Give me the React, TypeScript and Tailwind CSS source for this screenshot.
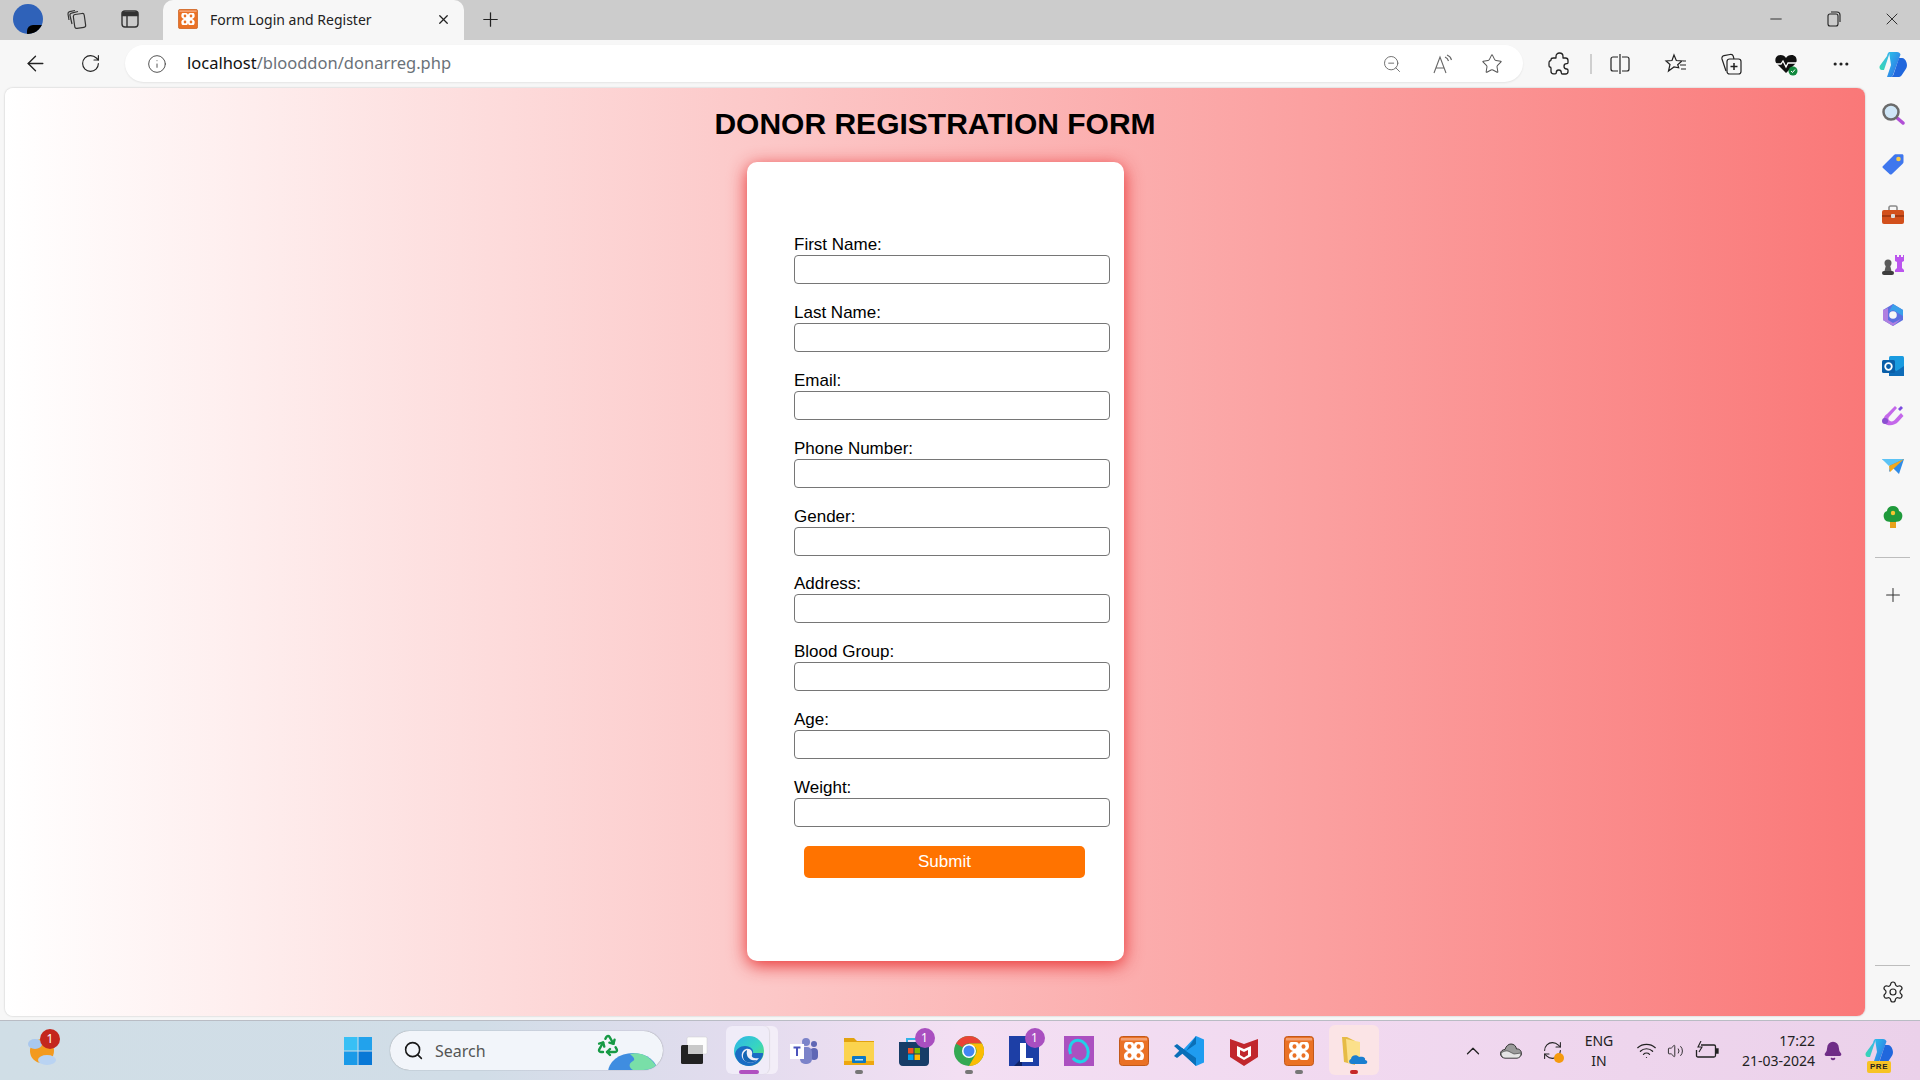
import React from "react";
import { ArrowLeft, RotateCw, Info, ZoomOut, Star, Plus, X, Minus, Settings, ChevronUp, Wifi, Volume2, Search, MoreHorizontal, Recycle, RefreshCw, Bell } from "lucide-react";

const fields = ["First Name:", "Last Name:", "Email:", "Phone Number:", "Gender:", "Address:", "Blood Group:", "Age:", "Weight:"];

function Xampp({ size = 30 }: { size?: number }) {
  return (
    <svg width={size} height={size} viewBox="0 0 30 30">
      <rect x="0.5" y="0.5" width="29" height="29" rx="3" fill="#ea7125" stroke="#c2591a" />
      <rect x="2" y="2" width="26" height="2.500" fill="#f3a071" />
      <path d="M7 6h5c2 0 3 1.500 3 3.500C15 7.500 16 6 18 6h5c1.500 0 2 2.500 2 4.500 0 2-1.500 3.500-4 4.500 2.500 1 4 2.500 4 4.500 0 2-.5 4.500-2 4.500h-5c-2 0-3-1.500-3-3.500 0 2-1 3.500-3 3.500H7c-1.500 0-2-2.500-2-4.500 0-2 1.500-3.500 4-4.500-2.500-1-4-2.500-4-4.500C5 8.500 5.500 6 7 6z" fill="#fff" />
      <ellipse cx="10.500" cy="10.500" rx="2" ry="2.200" fill="#ea7125" />
      <ellipse cx="19.500" cy="10.500" rx="2" ry="2.200" fill="#ea7125" />
      <ellipse cx="10.500" cy="19.500" rx="2" ry="2.200" fill="#ea7125" />
      <ellipse cx="19.500" cy="19.500" rx="2" ry="2.200" fill="#ea7125" />
    </svg>
  );
}

function Slot({ w, children, className = "" }: { w: string; children?: React.ReactNode; className?: string }) {
  return <div className={`relative flex shrink-0 items-center justify-center ${w} ${className}`}>{children}</div>;
}

function TitleBar() {
  return (
    <div className="flex h-[40px] shrink-0 bg-[#cccccc]">
      <Slot w="w-[13px]" />
      <div className="relative mt-[4px] h-[30px] w-[30px] overflow-hidden rounded-full bg-[#2f62b9]">
        <span className="absolute bottom-0 right-0 h-[9px] w-[16px] rounded-tl-[6px] bg-black" />
      </div>
      <Slot w="w-[68px]" className="pb-[2px]">
        <svg width="22" height="22" viewBox="0 0 22 22" fill="none" stroke="#333" strokeWidth="1.200">
          <rect x="8" y="6" width="11" height="14" rx="2" transform="rotate(-8 13 13)" />
          <path d="M6 16 4 7.500c-.3-1 .2-2 1.500-2.300L12 3.500" />
          <path d="M3 12 2 6c-.1-1.200.4-2 1.700-2.300L9 2.500" />
        </svg>
      </Slot>
      <Slot w="w-[38px]" className="pb-[2px]">
        <svg width="20" height="20" viewBox="0 0 20 20" fill="none" stroke="#333" strokeWidth="1.400">
          <rect x="2" y="2" width="16" height="16" rx="3" />
          <path d="M2.500 3.500h15v3h-15z" fill="#333" />
          <path d="M7 6v12" />
        </svg>
      </Slot>
      <div className="ml-[14px] flex h-[40px] w-[301px] shrink-0 items-center rounded-t-[10px] bg-[#f7f7f7] pb-[2px] pl-[15px] pr-[13px]">
        <Xampp size={20} />
        <span className="ml-[12px] flex-1 whitespace-nowrap font-['Noto_Sans',sans-serif] text-[14px] text-[#222]">Form Login and Register</span>
        <X size={15} color="#222" />
      </div>
      <Slot w="w-[52px]" className="pb-[2px]"><Plus size={23} strokeWidth={1.3} color="#222" /></Slot>
      <div className="flex-1" />
      <Slot w="w-[58px]" className="pb-[2px]"><Minus size={18} strokeWidth={1.2} color="#222" /></Slot>
      <Slot w="w-[58px]" className="pb-[2px]">
        <svg width="14" height="16" viewBox="0 0 14 16" fill="none" stroke="#222" strokeWidth="1.100">
          <rect x="1" y="3" width="10" height="12" rx="2" />
          <path d="M4 1h6c2 0 3 1 3 3v7" />
        </svg>
      </Slot>
      <Slot w="w-[57px]" className="pb-[2px]"><X size={20} strokeWidth={1.1} color="#222" /></Slot>
    </div>
  );
}

function Toolbar() {
  return (
    <div className="flex h-[48px] shrink-0 items-center bg-[#f7f7f7] pb-[1px]">
      <Slot w="w-[70px]"><ArrowLeft size={25} strokeWidth={1.300} color="#222" /></Slot>
      <Slot w="w-[40px]"><RotateCw size={21} strokeWidth={1.300} color="#222" /></Slot>
      <div className="ml-[15px] flex h-[37px] w-[1398px] shrink-0 items-center rounded-full bg-white pl-[22px] pr-[6px] shadow-[0_1px_2px_rgba(0,0,0,0.08)]">
        <Info size={20} strokeWidth={1.100} color="#444" />
        <span className="ml-[20px] whitespace-nowrap font-['Noto_Sans',sans-serif] text-[16.5px] text-[#111]">localhost<span className="text-[#6a7178]">/blooddon/donarreg.php</span></span>
        <div className="flex-1" />
        <Slot w="w-[50px]"><ZoomOut size={20} strokeWidth={1.100} color="#666" /></Slot>
        <Slot w="w-[50px]">
          <svg width="24" height="24" viewBox="0 0 24 24" fill="none" stroke="#666" strokeWidth="1.100">
            <path d="M4 21 10 5l6 16M6 16h8" />
            <path d="M15 5c2 1 3 2 3.500 4M17 3c2.500 1 4 3 4.500 5" />
          </svg>
        </Slot>
        <Slot w="w-[50px]"><Star size={22} strokeWidth={1.100} color="#555" /></Slot>
      </div>
      <Slot w="w-[67px]" className="pl-[5px]">
        <svg width="22" height="24" viewBox="0 0 22 24" fill="none" stroke="#222" strokeWidth="1.300" strokeLinejoin="round">
          <path d="M8 4.500C8 2.500 9.500 1 11.500 1S15 2.500 15 4.500V6h2.500C19 6 20 7 20 8.500v2c0 .8-.6 1.200-1.300 1.200-1.500 0-2.700 1-2.700 2.600s1.200 2.700 2.700 2.700c.7 0 1.300.4 1.300 1.200v1.300c0 1.500-1 2.500-2.500 2.500h-3c-.8 0-1.200-.6-1.200-1.300 0-1.500-1-2.700-2.500-2.700S8.300 19 8.300 20.500c0 .7-.5 1.300-1.200 1.300H5.500C4 21.800 3 20.800 3 19.300v-3c0-.7-.5-1.300-1.200-1.300C1 15 1 13.500 1 12s0-3 .8-3c.7 0 1.200-.5 1.200-1.200C3 6.500 4 6 5.500 6H8z" />
        </svg>
      </Slot>
      <span className="h-[20px] w-[2px] shrink-0 bg-[#cfcfcf]" />
      <Slot w="w-[56px]">
        <svg width="22" height="22" viewBox="0 0 22 22" fill="none" stroke="#222" strokeWidth="1.200">
          <path d="M9 4H4a2 2 0 0 0-2 2v10a2 2 0 0 0 2 2h5M13 4h5a2 2 0 0 1 2 2v10a2 2 0 0 1-2 2h-5M11 1v20" />
        </svg>
      </Slot>
      <Slot w="w-[55px]">
        <svg width="24" height="24" viewBox="0 0 24 24" fill="none" stroke="#222" strokeWidth="1.200">
          <path d="m10 3 2.300 5.500 5.700.5-4.300 3.800 1 3-4.700-.8-5.500 4 1.500-6.500L2 9l6-.5z" />
          <path d="M16 13h6M17 17h5M19 9h3" />
        </svg>
      </Slot>
      <Slot w="w-[55px]">
        <svg width="24" height="24" viewBox="0 0 24 24" fill="none" stroke="#222" strokeWidth="1.200">
          <path d="M7 19 3 7c-.4-1.500.4-3 2-3.300L11 2.500c1.500-.3 2.800.3 3.300 1.800L15 7" />
          <rect x="8" y="7" width="14" height="15" rx="2.500" />
          <path d="M15 11v7M11.500 14.500h7" strokeWidth="1.500" />
        </svg>
      </Slot>
      <Slot w="w-[55px]">
        <svg width="24" height="24" viewBox="0 0 24 24">
          <path d="M12 21 2.500 11.500C0 8.500 1.500 3 6.500 3c2.500 0 4.500 1 5.500 3 1-2 3-3 5.500-3 5 0 6.500 5.500 4 8.500z" fill="#111" />
          <path d="M1 12h6l2-3 3 6 2-4h9" fill="none" stroke="#fff" strokeWidth="1.300" />
          <circle cx="19" cy="19" r="4.500" fill="#128a3e" />
          <path d="m17 19 1.500 1.500 2.500-3" fill="none" stroke="#fff" strokeWidth="1" />
        </svg>
      </Slot>
      <Slot w="w-[55px]"><MoreHorizontal size={20} strokeWidth={1.800} color="#222" /></Slot>
      <Slot w="w-[49px]"><Copilot size={28} /></Slot>
    </div>
  );
}

function Copilot({ size }: { size: number }) {
  return (
    <svg width={size} height={size} viewBox="0 0 28 28">
      <defs>
        <linearGradient id="cpa" x1="0" y1="0" x2="1" y2="1">
          <stop offset="0" stopColor="#29c5e8" />
          <stop offset="0.6" stopColor="#2f8be8" />
          <stop offset="1" stopColor="#1c4fc9" />
        </linearGradient>
        <linearGradient id="cpb" x1="0" y1="1" x2="1" y2="0">
          <stop offset="0" stopColor="#36d9b0" />
          <stop offset="1" stopColor="#3bb2f0" />
        </linearGradient>
      </defs>
      <path d="M10 2h8c2 0 3 1 3.500 2.500L18 14l-4 11c-.5 1.500-1.500 2-3 2H8l4-12z" fill="url(#cpa)" />
      <path d="M8 6c.5-2 1-4 3-4l-4 12-2 6H3c-2 0-3-2-2.300-4z" fill="url(#cpb)" />
      <path d="M20 8h3c2 0 3.500 1.500 4.500 4.500.9 3 .5 5-1 7l-4 6c-1 1-2 1.500-3.500 1.500h-8c2 0 3-1 3.500-2.500z" fill="#2067dd" />
    </svg>
  );
}

function Form() {
  return (
    <main className="flex flex-1 flex-col items-center overflow-hidden rounded-[8px] bg-[linear-gradient(to_right,#ffffff,#fcc9c9_40%,#fa7878)] shadow-[0_0_2px_rgba(0,0,0,0.25)]">
      <h1 className="mt-[19px] font-['Liberation_Sans',Arial,sans-serif] text-[30px] font-bold leading-[33px] text-black">DONOR REGISTRATION FORM</h1>
      <form className="mt-[22px] h-[799px] w-[377px] rounded-[10px] bg-white pl-[47.500px] pr-[14px] pt-[71px] font-['Liberation_Sans',Arial,sans-serif] shadow-[0_4px_18px_rgba(230,30,30,0.9)]">
        {fields.map((f) => (
          <label key={f} className="mb-[16.900px] block text-[17px] text-black">
            <span className="block h-[22px] leading-[24px]">{f}</span>
            <input className="block h-[29px] w-[316px] rounded-[4px] border border-[#767676] bg-white" />
          </label>
        ))}
        <button type="button" className="ml-[10px] mt-[19px] block h-[32px] w-[281px] rounded-[5px] bg-[#ff7300] text-[17px] text-white">Submit</button>
      </form>
    </main>
  );
}

function SideIcon({ children }: { children: React.ReactNode }) {
  return <div className="flex h-[50.300px] shrink-0 items-center justify-center">{children}</div>;
}

function Sidebar() {
  return (
    <aside className="flex w-[55px] shrink-0 flex-col items-center pt-[1px]">
      <SideIcon>
        <svg width="24" height="24" viewBox="0 0 24 24">
          <path d="m15 15 7 6" stroke="#b14fd6" strokeWidth="3.500" strokeLinecap="round" />
          <circle cx="10" cy="10" r="7.500" fill="#cfe6f7" stroke="#6b6b6b" strokeWidth="2.500" />
        </svg>
      </SideIcon>
      <SideIcon>
        <svg width="24" height="24" viewBox="0 0 24 24">
          <path d="M2 14 13 3c.5-.5 1-.7 2-.7h6c1 0 1.500.6 1.500 1.500v6c0 1-.3 1.500-.8 2L11 22c-.8.700-1.800.700-2.500 0L2 16c-.7-.6-.7-1.400 0-2z" fill="#3f77ee" />
          <circle cx="17.500" cy="7" r="2.300" fill="#f6c94b" />
        </svg>
      </SideIcon>
      <SideIcon>
        <svg width="24" height="24" viewBox="0 0 24 24">
          <path d="M8 7V4.500C8 3.700 8.700 3 9.500 3h5c.8 0 1.500.7 1.500 1.500V7" fill="none" stroke="#8a8a8a" strokeWidth="1.600" />
          <rect x="1" y="7" width="22" height="14" rx="2" fill="#d2501c" />
          <rect x="1" y="12" width="22" height="2" fill="#a63a12" />
          <rect x="10" y="11" width="4" height="4" rx="1" fill="#ddd" />
        </svg>
      </SideIcon>
      <SideIcon>
        <svg width="24" height="24" viewBox="0 0 24 24">
          <path d="M14 2h2v2h2V2h2v2h2V2h1v6l-2 1v6l2 2v2h-9v-2l2-2V9l-2-1z" fill="#bb55ee" />
          <circle cx="7" cy="10" r="3.500" fill="#5b5b5b" />
          <path d="M5 12h4l1.500 6h-7z" fill="#5b5b5b" />
          <rect x="1" y="18" width="12" height="4" rx="2" fill="#3d3d3d" />
        </svg>
      </SideIcon>
      <SideIcon>
        <svg width="24" height="24" viewBox="0 0 24 24">
          <path d="M12 1 22 7v10l-10 6-10-6V7z" fill="#5d6fe0" />
          <path d="M12 1 22 7v6l-5-3-5-3-4 2z" fill="#3aa0ea" />
          <path d="M2 7l5-2v12l5 3 8-4-8 7-10-6z" fill="#b07fe0" />
          <circle cx="12" cy="12" r="3.800" fill="#f7f7f7" />
        </svg>
      </SideIcon>
      <SideIcon>
        <svg width="24" height="24" viewBox="0 0 24 24">
          <rect x="8" y="2" width="15" height="20" rx="1.500" fill="#1a9be0" />
          <path d="M8 13l7.500 4L23 12v10H8z" fill="#0e6cb8" />
          <rect x="1" y="6" width="13" height="13" rx="1.500" fill="#0a5ea8" />
          <circle cx="7.500" cy="12.500" r="3.300" fill="none" stroke="#fff" strokeWidth="1.800" />
        </svg>
      </SideIcon>
      <SideIcon>
        <svg width="24" height="24" viewBox="0 0 24 24">
          <path d="M3 19c-2-3 0-7 3-9L14 2l2 2-8 9c-1 1-1 3 1 4s4 0 5.500-2L20 9l2.500 3-5 5.500c-4 4.500-11 5-14.500 1.500z" fill="#c468ea" />
          <circle cx="4" cy="17" r="3" fill="#8a4fd0" />
          <path d="m17 5 3-3 2 2-3 3z" fill="#7c4be0" />
        </svg>
      </SideIcon>
      <SideIcon>
        <svg width="24" height="24" viewBox="0 0 24 24" className="-translate-y-[2px]">
          <path d="M1 7h22l-5 15-6-6-4 4 1-7z" fill="#2f8be8" />
          <path d="M1 7h22L8 14z" fill="#5cc3f5" />
          <path d="M8 14 23 7 9 20z" fill="#f2a81c" />
        </svg>
      </SideIcon>
      <SideIcon>
        <svg width="24" height="24" viewBox="0 0 24 24">
          <rect x="9" y="16" width="6" height="7" fill="#e8a21c" />
          <path d="M12 1c4 0 6 3 6 5 3 1 4 4 3 7-1 3-3 4-9 4s-8-1-9-4c-1-3 0-6 3-7 0-2 2-5 6-5z" fill="#1f9a3b" />
          <circle cx="12" cy="8" r="2.200" fill="#f6c431" />
        </svg>
      </SideIcon>
      <span className="mt-[15px] h-[1px] w-[35px] shrink-0 bg-[#bdbdbd]" />
      <div className="mt-[25px] flex h-[24px] shrink-0 items-center"><Plus size={22} strokeWidth={1.100} color="#333" /></div>
      <div className="flex-1" />
      <span className="h-[1px] w-[35px] shrink-0 bg-[#bdbdbd]" />
      <div className="mb-[12px] mt-[14px] flex h-[24px] shrink-0 items-center"><Settings size={24} strokeWidth={1.200} color="#222" /></div>
    </aside>
  );
}

function TaskBadge({ n }: { n: string }) {
  return <span className="absolute left-[28px] top-[7px] flex h-[20px] w-[20px] items-center justify-center rounded-full bg-[#a94fc0] font-['Noto_Sans',sans-serif] text-[12px] text-white">{n}</span>;
}

function Dot({ c, w = "w-[8px]" }: { c: string; w?: string }) {
  return <span className={`absolute bottom-[6px] left-1/2 h-[4px] -translate-x-1/2 rounded-full ${w} ${c}`} />;
}

function Edge() {
  return (
    <svg width="30" height="30" viewBox="0 0 30 30">
      <defs>
        <linearGradient id="edg" x1="0" y1="0" x2="1" y2="1">
          <stop offset="0" stopColor="#2fb3e8" />
          <stop offset="0.55" stopColor="#37d6c0" />
          <stop offset="1" stopColor="#6fdc5a" />
        </linearGradient>
      </defs>
      <circle cx="15" cy="15" r="15" fill="url(#edg)" />
      <path d="M29 19c-2 7-8 11-14 11C7 30 2 25 1 18c1-5 5-8 10-8 6 0 9 4 8 7h10z" fill="#1a6cc4" />
      <path d="M12 13c5-1 7 3 6 6-1 2 2 4 7 3-3 5-10 6-14 3-5-3-4-11 1-12z" fill="#f0eef8" />
      <path d="M13 14c-5 2-5 8-2 11 3 2 8 3 12-1-5 1-9-1-10-5-.6-2 0-4 0-5z" fill="#1565b4" />
    </svg>
  );
}

function Teams() {
  return (
    <svg width="30" height="30" viewBox="0 0 30 30">
      <circle cx="17" cy="6" r="4" fill="#7b83c9" />
      <circle cx="25" cy="8" r="3" fill="#5f67b5" />
      <rect x="21" y="12" width="8" height="12" rx="4" fill="#5f67b5" />
      <rect x="11" y="11" width="12" height="17" rx="5" fill="#7b83c9" />
      <rect x="1" y="8" width="14" height="15" fill="#fff" />
      <path d="M4.500 11.500h7M8 11.500V20" stroke="#4b53bc" strokeWidth="2" fill="none" />
    </svg>
  );
}

function Explorer() {
  return (
    <svg width="30" height="30" viewBox="0 0 30 30">
      <path d="M0 2h10l3 3h17v4H0z" fill="#e2a20f" />
      <rect x="0" y="6" width="30" height="23" fill="#fbd34e" />
      <rect x="0" y="25" width="30" height="4" fill="#eea70f" />
      <rect x="8" y="20" width="14" height="7" rx="1" fill="#0b78c6" />
      <rect x="11" y="23" width="8" height="1.500" fill="#bfe3f7" />
    </svg>
  );
}

function Store() {
  return (
    <svg width="30" height="30" viewBox="0 0 30 30">
      <path d="M8 7V3h14v4" fill="none" stroke="#34b3e8" strokeWidth="2" />
      <path d="M0 6h30v20c0 2-1 4-4 4H4c-3 0-4-2-4-4z" fill="#173d68" />
      <rect x="9" y="12" width="5.500" height="5.500" fill="#f25022" />
      <rect x="15.500" y="12" width="5.500" height="5.500" fill="#7fba00" />
      <rect x="9" y="18.500" width="5.500" height="5.500" fill="#00a4ef" />
      <rect x="15.500" y="18.500" width="5.500" height="5.500" fill="#ffb900" />
    </svg>
  );
}

function Chrome() {
  return (
    <svg width="30" height="30" viewBox="0 0 30 30">
      <circle cx="15" cy="15" r="15" fill="#34a853" />
      <path d="M15 0a15 15 0 0 1 13 7.500H15a7.500 7.500 0 0 0-6.500 3.750L2 7.500A15 15 0 0 1 15 0z" fill="#ea4335" />
      <path d="M28 7.500A15 15 0 0 1 15 30l6.500-11.250a7.500 7.500 0 0 0 0-7.500H15V7.500z" fill="#fbbc04" />
      <circle cx="15" cy="15" r="7" fill="#fff" />
      <circle cx="15" cy="15" r="5.500" fill="#4285f4" />
    </svg>
  );
}

function LApp() {
  return (
    <svg width="30" height="30" viewBox="0 0 30 30">
      <rect width="30" height="30" fill="#1d3fa6" />
      <path d="M5 30 11 24V7h2v23z" fill="#0e2266" />
      <path d="M11 7h6v15h7v4H11z" fill="#fff" />
    </svg>
  );
}

function RingApp() {
  return (
    <svg width="30" height="30" viewBox="0 0 30 30">
      <rect width="30" height="30" fill="#ab50c0" />
      <ellipse cx="15" cy="15" rx="9" ry="11" fill="none" stroke="#22d0e8" strokeWidth="3" strokeDasharray="58 8" transform="rotate(160 15 15)" />
    </svg>
  );
}

function VSCode() {
  return (
    <svg width="30" height="30" viewBox="0 0 30 30">
      <path d="M22 0 30 3.500v23L22 30 7 16z" fill="#1f9cf0" />
      <path d="M22 0v8L12 15l10 7v8L0 10l3-2 9 7z" fill="#0a6fb8" />
      <path d="M0 20l3 2 9-7-4-3z" fill="#0a6fb8" />
    </svg>
  );
}

function McAfee() {
  return (
    <svg width="30" height="30" viewBox="0 0 30 30">
      <path d="M1 3 15 8l14-5v18l-14 9-14-9z" fill="#c1272d" />
      <path d="M8 10v10l7 4 7-4V10l-7 3z" fill="#fff" />
      <path d="M11 14v5l4 2.500 4-2.500v-5l-4 2z" fill="#c1272d" />
    </svg>
  );
}

function FolderCloud() {
  return (
    <svg width="30" height="30" viewBox="0 0 30 30">
      <path d="M3 1h5l8 4v24l-11-3z" fill="#e6bb45" />
      <path d="M7 3l14 3v21H9z" fill="#fbe08b" />
      <path d="M13 28c-3 0-4-4-1-5 0-4 6-5 8-2 4-1 7 1 6 3 3 0 3 4 0 4z" fill="#1a7fd0" />
    </svg>
  );
}

function Taskbar() {
  return (
    <footer className="flex h-[60px] shrink-0 items-center border-t border-[#b9bcc4] bg-[linear-gradient(to_right,#d0dee6_0%,#d1dde7_25%,#e2dcee_38%,#f3dff3_50%,#f1d9f0_70%,#ebd1ea_100%)]">
      <Slot w="w-[84px]" className="h-[59px]">
        <svg width="30" height="30" viewBox="0 0 30 30">
          <circle cx="15" cy="15" r="12" fill="#f39a1f" />
          <ellipse cx="8" cy="8" rx="7" ry="5" fill="#a9c8ee" />
          <ellipse cx="20" cy="24" rx="9" ry="5" fill="#b9d3f2" />
        </svg>
        <span className="absolute left-[40px] top-[8px] flex h-[20px] w-[20px] items-center justify-center rounded-full bg-[#c4261d] font-['Noto_Sans',sans-serif] text-[12px] text-white">1</span>
      </Slot>
      <svg width="30" height="30" viewBox="0 0 30 30" className="ml-[259px] shrink-0">
        <rect x="1" y="1" width="13.500" height="13.500" fill="#38c0f5" />
        <rect x="15.500" y="1" width="13.500" height="13.500" fill="#22a2ec" />
        <rect x="1" y="15.500" width="13.500" height="13.500" fill="#1a9ae8" />
        <rect x="15.500" y="15.500" width="13.500" height="13.500" fill="#0878d6" />
      </svg>
      <div className="relative ml-[17px] flex h-[39px] w-[273px] shrink-0 items-center overflow-hidden rounded-full bg-[#f2f5fa] pl-[13px] shadow-[0_0_1px_rgba(0,0,0,0.5)]">
        <Search size={21} strokeWidth={1.800} color="#1a1a1a" />
        <span className="ml-[11px] font-['Noto_Sans',sans-serif] text-[16px] text-[#555]">Search</span>
        <Recycle size={24} strokeWidth={2.400} color="#179a45" className="absolute left-[206px] top-[2px]" />
        <svg width="50" height="17" viewBox="0 0 50 17" className="absolute bottom-0 right-[5px]">
          <ellipse cx="25" cy="20" rx="25" ry="20" fill="#3f8de0" />
          <path d="M22 1c8-2 20 0 28 15l-10 1H25c-5-3-4-7 0-9 3-2 0-4-3-7z" fill="#79dfa8" />
        </svg>
      </div>
      <Slot w="w-[55px]" className="ml-[3.500px] h-[59px]">
        <svg width="30" height="30" viewBox="0 0 30 30">
          <rect x="8" y="1" width="20" height="17" rx="1.500" fill="#fdfdfd" stroke="#ccc" strokeWidth=".5" />
          <rect x="2" y="9" width="22" height="19" rx="1.500" fill="#222" />
          <rect x="9" y="9" width="15" height="9" fill="#c9c9c9" />
        </svg>
      </Slot>
      <Slot w="w-[55px]" className="h-[59px]">
        <span className="absolute bottom-[6px] left-[8px] top-[5px] w-[48px] rounded-[6px] bg-[#f3eef8]" />
        <span className="absolute bottom-[6px] left-[4px] top-[5px] w-[43px] rounded-[6px] bg-[#f0ecf8] shadow-[1px_0_1px_rgba(0,0,0,0.08)]" />
        <span className="relative"><Edge /></span>
        <Dot c="bg-[#b050c0]" w="w-[20px]" />
      </Slot>
      <Slot w="w-[55px]" className="h-[59px]"><Teams /></Slot>
      <Slot w="w-[55px]" className="h-[59px]"><Explorer /><Dot c="bg-[#777]" /></Slot>
      <Slot w="w-[55px]" className="h-[59px]"><Store /><TaskBadge n="1" /></Slot>
      <Slot w="w-[55px]" className="h-[59px]"><Chrome /><Dot c="bg-[#777]" /></Slot>
      <Slot w="w-[55px]" className="h-[59px]"><LApp /><TaskBadge n="1" /></Slot>
      <Slot w="w-[55px]" className="h-[59px]"><RingApp /></Slot>
      <Slot w="w-[55px]" className="h-[59px]"><Xampp /></Slot>
      <Slot w="w-[55px]" className="h-[59px]"><VSCode /></Slot>
      <Slot w="w-[55px]" className="h-[59px]"><McAfee /></Slot>
      <Slot w="w-[55px]" className="h-[59px]"><Xampp /><Dot c="bg-[#777]" /></Slot>
      <Slot w="w-[55px]" className="h-[59px]">
        <span className="absolute bottom-[5px] left-[2px] top-[4px] w-[50px] rounded-[6px] bg-[#fbe4e6]" />
        <span className="relative"><FolderCloud /></span>
        <Dot c="bg-[#c62828]" />
      </Slot>
      <Slot w="w-[36px]" className="ml-[73px]"><ChevronUp size={22} strokeWidth={1.400} color="#222" /></Slot>
      <Slot w="w-[41px]">
        <svg width="22" height="16" viewBox="0 0 22 16">
          <path d="M5 15C2 15 .5 13 .5 10.500 .5 8 3 6.500 5 6.500 6 3 8.500 1 11 1c3 0 5 2 5.500 5 3-.5 5 2 5 4.500S19 15 17 15z" fill="#9a9a9a" stroke="#333" strokeWidth="1" />
          <path d="M1 10c3-2 6-3 9-1l4 2 7-1c0 3-2 5-4 5H5c-2 0-4-2-4-5z" fill="#e5e5e5" stroke="#333" strokeWidth=".6" />
        </svg>
      </Slot>
      <Slot w="w-[41px]">
        <RefreshCw size={21} strokeWidth={1.200} color="#222" />
        <span className="absolute left-[22px] top-[13px] h-[10px] w-[10px] rounded-full bg-[#f59a0e]" />
      </Slot>
      <Slot w="w-[53px]">
        <div className="text-center font-['Noto_Sans',sans-serif] text-[14px] leading-[20px] text-[#222]">ENG<br />IN</div>
      </Slot>
      <Slot w="w-[41px]"><Wifi size={21} strokeWidth={1.400} color="#222" /></Slot>
      <Slot w="w-[17px]"><Volume2 size={22} strokeWidth={1.300} color="#222" /></Slot>
      <Slot w="w-[47px]">
        <svg width="24" height="20" viewBox="0 0 24 20" fill="none" stroke="#222" strokeWidth="1.300">
          <path d="M6 4h13c1 0 1.500 .6 1.500 1.500v9c0 1-.5 1.500-1.500 1.500H3c-1 0-1.500-.5-1.500-1.500V9" />
          <path d="M21 8h2v4h-2" fill="#222" />
          <path d="M6 0 3 6h4l-3 5" strokeWidth="1.100" />
        </svg>
      </Slot>
      <div className="flex w-[84.500px] shrink-0 flex-col items-end font-['Noto_Sans',sans-serif] text-[14px] leading-[20px] text-[#222]">
        <span>17:22</span>
        <span>21-03-2024</span>
      </div>
      <Slot w="w-[36px]"><Bell size={20} fill="#6f2d87" color="#6f2d87" /></Slot>
      <Slot w="w-[56px]">
        <Copilot size={28} />
        <span className="absolute bottom-[-8px] left-[16px] flex h-[12px] w-[24px] items-center justify-center rounded-[2px] bg-[#f7c325] font-['Liberation_Sans',sans-serif] text-[8px] font-bold leading-none tracking-[0.5px] text-[#222]">PRE</span>
      </Slot>
    </footer>
  );
}

export default function App() {
  return (
    <div className="flex h-screen w-[1920px] flex-col overflow-hidden bg-[#f7f7f7]">
      <TitleBar />
      <Toolbar />
      <div className="flex min-h-0 flex-1 pb-[4px] pl-[5px]">
        <Form />
        <Sidebar />
      </div>
      <Taskbar />
    </div>
  );
}
